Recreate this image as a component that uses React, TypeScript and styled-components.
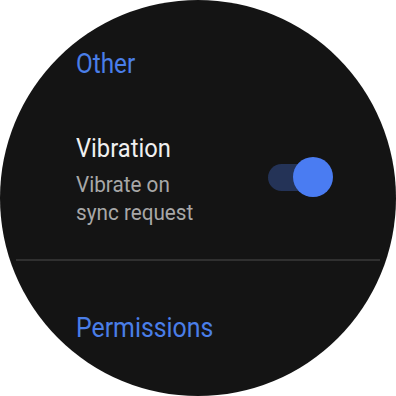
import React from 'react';
import styled, { createGlobalStyle } from 'styled-components';

const Global = createGlobalStyle`
    html, body {
        margin: 0;
        padding: 0;
        background: #ffffff;
    }
`;

const Screen = styled.div`
    width: 396px;
    height: 396px;
    border-radius: 50%;
    overflow: hidden;
    background: #141414;
    display: flex;
    flex-direction: column;
    font-family: Roboto, "Noto Sans", sans-serif;
`;

// the watch font is a touch narrower than Roboto
const Narrow = styled.div<{ $sx?: number }>`
    transform: scaleX(${(p) => p.$sx ?? 0.9});
    transform-origin: left center;
    white-space: nowrap;
`;

const SectionHeader = styled(Narrow)<{ $top: number }>`
    margin-top: ${(p) => p.$top}px;
    margin-left: 76px;
    font-size: 27px;
    line-height: 32px;
    color: #4a7ee8;
`;

const Row = styled.div`
    margin-top: 53px;
    padding: 0 63px 0 76px;
    display: flex;
    align-items: flex-start;
    justify-content: space-between;
`;

const Texts = styled.div`
    display: flex;
    flex-direction: column;
    gap: 7px;
`;

const Title = styled(Narrow)`
    font-size: 25.5px;
    line-height: 30px;
    color: #f0f0f0;
`;

const Subtitle = styled(Narrow)`
    font-size: 22.5px;
    line-height: 28px;
    color: #a8a8a8;
`;

const Toggle = styled.div`
    position: relative;
    width: 65px;
    height: 40px;
    margin-top: 24px;
    display: flex;
    align-items: center;
`;

const Track = styled.div`
    width: 54px;
    height: 27px;
    border-radius: 14px;
    background: #243357;
`;

const Thumb = styled.div`
    position: absolute;
    right: 0;
    top: 0;
    width: 40px;
    height: 40px;
    border-radius: 50%;
    background: #4a7cf2;
`;

const Divider = styled.div`
    margin: 33px 16px 0;
    height: 2px;
    background: #303030;
`;

export default function App() {
    return (
        <>
            <Global />
            <Screen>
                <SectionHeader $top={48}>Other</SectionHeader>
                <Row>
                    <Texts>
                        <Title $sx={0.93}>Vibration</Title>
                        <div>
                            <Subtitle $sx={0.92}>Vibrate on</Subtitle>
                            <Subtitle $sx={0.92}>sync request</Subtitle>
                        </div>
                    </Texts>
                    <Toggle>
                        <Track />
                        <Thumb />
                    </Toggle>
                </Row>
                <Divider />
                <SectionHeader $top={51} $sx={0.92}>Permissions</SectionHeader>
            </Screen>
        </>
    );
}
